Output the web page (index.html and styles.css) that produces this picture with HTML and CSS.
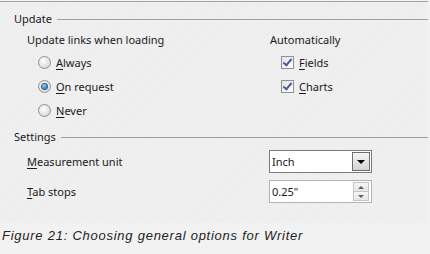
FILE: index.html
```html
<!doctype html>
<html>
<head>
<meta charset="utf-8">
<title>Options - Writer - General</title>
<link rel="stylesheet" href="styles.css">
</head>
<body>

<div class="dialog">

    <div class="legend">Update</div>

    <div class="update">
        <div class="col col-links">
            <div class="heading">Update links when loading</div>
            <label class="opt"><span class="radio"></span><span><u>A</u>lways</span></label>
            <label class="opt"><span class="radio on"></span><span><u>O</u>n request</span></label>
            <label class="opt"><span class="radio"></span><span><u>N</u>ever</span></label>
        </div>
        <div class="col col-auto">
            <div class="heading">Automatically</div>
            <label class="opt"><span class="check"></span><span><u>F</u>ields</span></label>
            <label class="opt"><span class="check"></span><span><u>C</u>harts</span></label>
        </div>
    </div>

    <div class="legend legend-settings">Settings</div>

    <div class="settings">
        <div class="field">
            <span class="field-label"><u>M</u>easurement unit</span>
            <div class="combo">
                <span class="combo-text">Inch</span>
                <span class="combo-btn"></span>
            </div>
        </div>
        <div class="field">
            <span class="field-label"><u>T</u>ab stops</span>
            <div class="spin">
                <span class="combo-text">0.25"</span>
                <span class="spin-btns"><span class="up"></span><span class="down"></span></span>
            </div>
        </div>
    </div>

</div>

<p class="caption">Figure 21: Choosing general options for Writer</p>

</body>
</html>
```

FILE: styles.css
```css
body { margin: 0; padding: 0; background-color: #f2f2f2; }
* { font-family: 'Noto Sans', 'Open Sans', Arial, sans-serif; font-size: 11px; color: #1a1a1a; box-sizing: border-box; }
u { text-decoration-thickness: 1px; text-underline-offset: 2px; }

.dialog { width: 428px; height: 222px; margin-top: 1px; padding: 9px 0 0 14px; border-top: 1px solid #a3a3a3;
  background: repeating-linear-gradient(135deg, #f0f0f0 0 2px, #ececec 2px 3px); }

.legend { display: flex; align-items: center; gap: 5px; height: 16px; line-height: 16px; }
.legend::after { content: ''; flex: 1; border-top: 1px solid #a0a0a0; margin-top: 1px; }
.legend-settings { margin-top: 7px; }

.update { display: flex; margin-top: 5px; }
.col { display: flex; flex-direction: column; }
.col-links { width: 256px; padding-left: 13px; }
.heading { height: 16px; line-height: 16px; margin-bottom: 2px; }
.opt { display: flex; align-items: center; gap: 5px; height: 24px; padding-left: 11px; }

.radio { width: 13px; height: 13px; border-radius: 50%; border: 1px solid #8f8f8f;
  background: radial-gradient(circle at 40% 35%, #ffffff, #d8d8d8 80%); display: flex; align-items: center; justify-content: center; }
.radio.on::after { content: ''; width: 5px; height: 5px; border-radius: 50%;
  background: radial-gradient(circle at 40% 35%, #9fdcff, #1a6fb2 70%, #0f4d80); box-shadow: 0 0 0 1px #2a5f92; }

.check { position: relative; width: 13px; height: 13px; border: 1px solid #8e8f8f;
  background: linear-gradient(135deg, #e2e2e2, #ffffff); }
.check::after { content: ''; position: absolute; left: 3px; top: 0px; width: 3px; height: 7px;
  border: solid #4a5f97; border-width: 0 2px 2px 0; transform: rotate(40deg); }

.settings { display: flex; flex-direction: column; gap: 7px; margin-top: 5px; }
.field { display: flex; align-items: center; height: 23px; padding-left: 13px; }
.field-label { width: 242px; }

.combo, .spin { display: flex; align-items: center; justify-content: space-between; width: 103px; height: 23px;
  background: #ffffff; padding: 0 1px 0 2px; }
.combo { border: 1px solid #7a7a7a; }
.spin { border: 1px solid #b3b3b3; }
.combo-btn { width: 18px; height: 19px; border: 1px solid #6d6d6d; display: flex; align-items: center; justify-content: center;
  background: linear-gradient(#f4f4f4, #e4e4e4 50%, #d3d3d3); }
.combo-btn::after { content: ''; border: 4px solid transparent; border-top: 4px solid #000; border-bottom: 0; margin-top: 1px; }

.spin-btns { display: flex; flex-direction: column; width: 16px; height: 19px; margin-right: 1px; border: 1px solid #c4c4c4; }
.spin-btns span { flex: 1; display: flex; align-items: center; justify-content: center; background: linear-gradient(#f6f6f6, #e6e6e6); }
.spin-btns .up { border-bottom: 1px solid #c4c4c4; }
.spin-btns .up::after { content: ''; border: 3px solid transparent; border-bottom: 3px solid #4d6185; border-top: 0; }
.spin-btns .down::after { content: ''; border: 3px solid transparent; border-top: 3px solid #4d6185; border-bottom: 0; }

.caption { margin: 5px 0 0 2px; font-family: 'Liberation Sans', Arial, sans-serif; font-style: italic; font-size: 13px;
  letter-spacing: 0.75px; line-height: 16px; color: #222; }
```
